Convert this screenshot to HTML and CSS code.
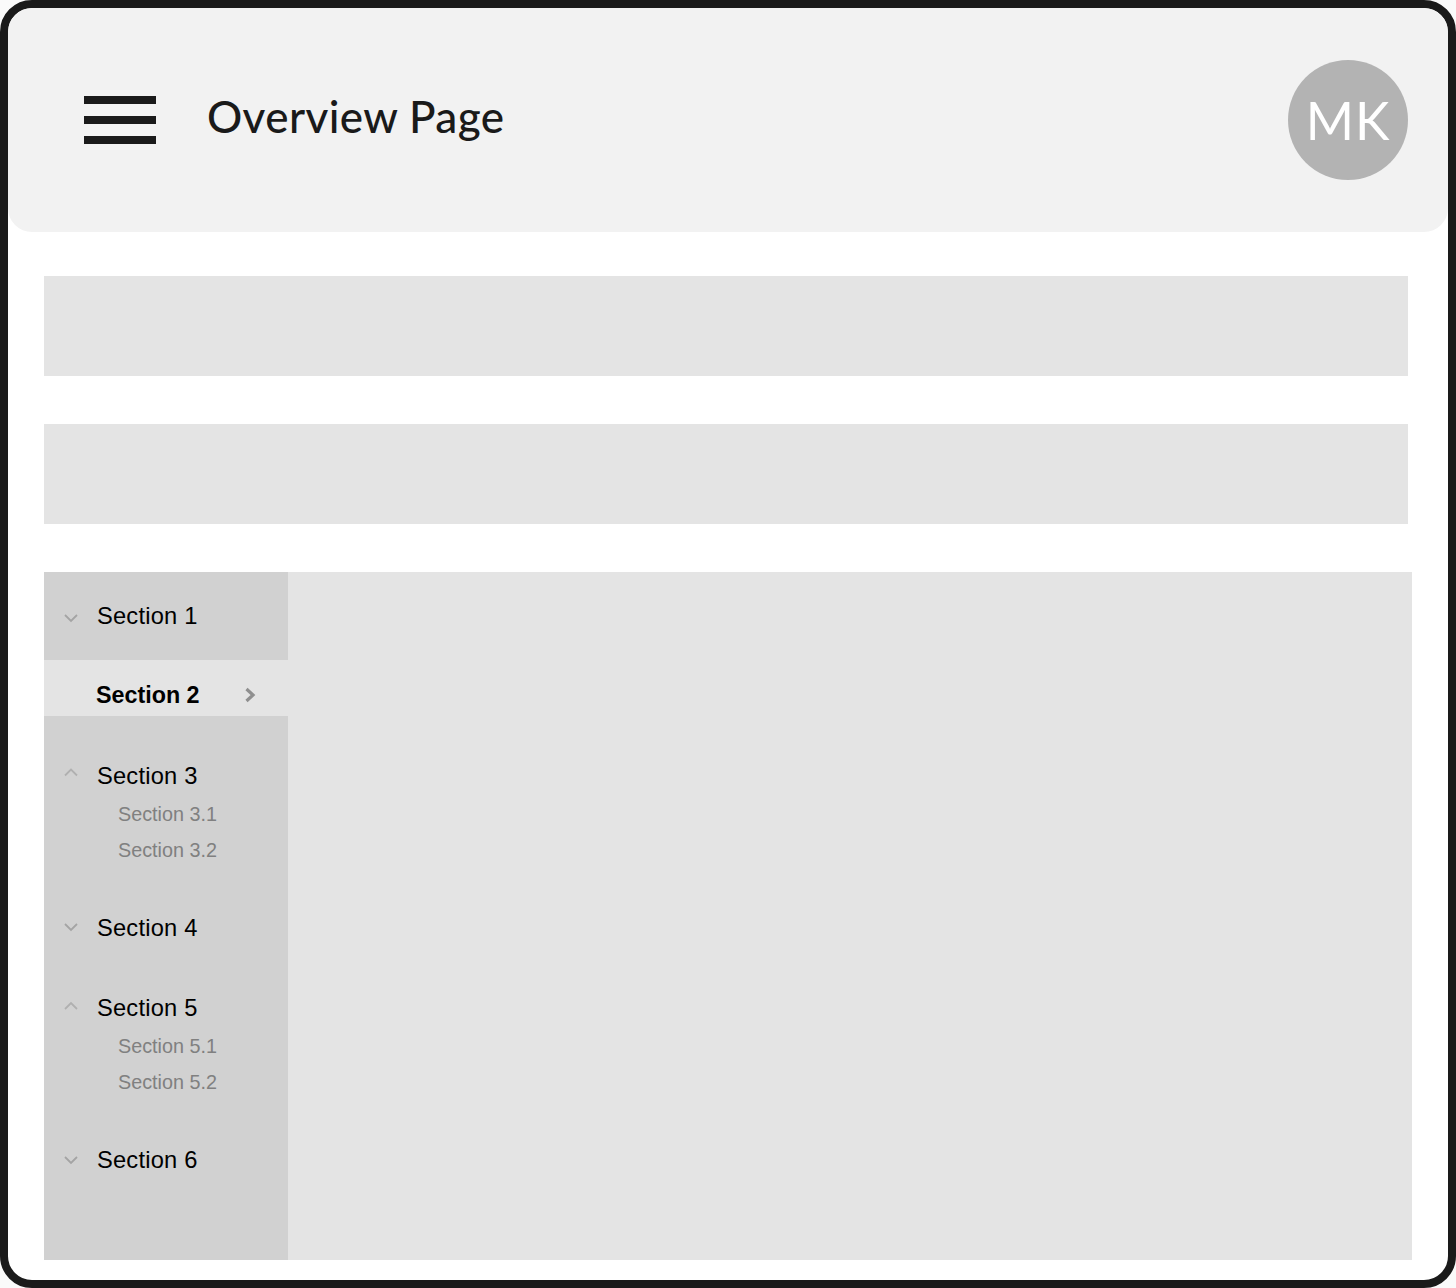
FILE: index.html
```html
<!DOCTYPE html>
<html lang="en">

<head>
    <meta charset="UTF-8">
    <title>Overview Page</title>
    <link rel="stylesheet" href="styles.css">
</head>

<body>

    <div class="frame">

        <header class="topbar">
            <div class="burger">
                <span></span>
                <span></span>
                <span></span>
            </div>
            <h1 class="title">Overview Page</h1>
            <div class="avatar">MK</div>
        </header>

        <main class="content">
            <div class="bar"></div>
            <div class="bar"></div>

            <section class="panel">
                <nav class="sidebar">

                    <div class="group first">
                        <div class="heading">
                            <svg class="chev" width="14" height="16" viewBox="0 0 14 16">
                                <path d="M1 7 L7 13 L13 7" fill="none" stroke="#a4a4a4" stroke-width="1.8" />
                            </svg>
                            <span>Section 1</span>
                        </div>
                    </div>

                    <div class="group active">
                        <div class="heading">
                            <span class="noicon"></span>
                            <span>Section 2</span>
                            <svg class="arrow" width="12" height="16" viewBox="0 0 12 16">
                                <path d="M2.5 2 L9 8 L2.5 14" fill="none" stroke="#8f8f8f" stroke-width="3.2" />
                            </svg>
                        </div>
                    </div>

                    <div class="group open after-active">
                        <div class="heading">
                            <svg class="chev" width="14" height="16" viewBox="0 0 14 16">
                                <path d="M1 7.5 L7 1.5 L13 7.5" fill="none" stroke="#b0b0b0" stroke-width="1.8" />
                            </svg>
                            <span>Section 3</span>
                        </div>
                        <p class="sub">Section 3.1</p>
                        <p class="sub">Section 3.2</p>
                    </div>

                    <div class="group">
                        <div class="heading">
                            <svg class="chev" width="14" height="16" viewBox="0 0 14 16">
                                <path d="M1 4 L7 10 L13 4" fill="none" stroke="#a4a4a4" stroke-width="1.8" />
                            </svg>
                            <span>Section 4</span>
                        </div>
                    </div>

                    <div class="group open">
                        <div class="heading">
                            <svg class="chev" width="14" height="16" viewBox="0 0 14 16">
                                <path d="M1 9 L7 3 L13 9" fill="none" stroke="#b0b0b0" stroke-width="1.8" />
                            </svg>
                            <span>Section 5</span>
                        </div>
                        <p class="sub">Section 5.1</p>
                        <p class="sub">Section 5.2</p>
                    </div>

                    <div class="group">
                        <div class="heading">
                            <svg class="chev" width="14" height="16" viewBox="0 0 14 16">
                                <path d="M1 5 L7 11 L13 5" fill="none" stroke="#a4a4a4" stroke-width="1.8" />
                            </svg>
                            <span>Section 6</span>
                        </div>
                    </div>

                </nav>
                <div class="main-area"></div>
            </section>
        </main>

    </div>

</body></html>
```

FILE: styles.css
```css
* {
    box-sizing: border-box;
}

body {
    margin: 0;
    background-color: #fafafa;
}

.frame {
    height: 1288px;
    border: 8px solid #1a1a1a;
    border-radius: 32px;
    background-color: #fff;
    overflow: hidden;
    display: flex;
    flex-direction: column;
}

.topbar {
    height: 224px;
    flex-shrink: 0;
    background-color: #f2f2f2;
    border-radius: 24px;
    display: flex;
    align-items: center;
    padding-left: 76px;
    padding-right: 40px;
}

.burger {
    display: flex;
    flex-direction: column;
    gap: 12px;
    width: 72px;
}

.burger span {
    display: block;
    height: 8px;
    background-color: #1a1a1a;
}

.title {
    margin: 0 0 0 51px;
    padding-bottom: 8px;
    font-family: "Lato", sans-serif;
    font-weight: 500;
    font-size: 44px;
    color: #1a1a1a;
    letter-spacing: 0.4px;
    flex: 1;
}

.avatar {
    width: 120px;
    height: 120px;
    border-radius: 50%;
    background-color: #b3b3b3;
    color: #fff;
    font-family: "Lato", sans-serif;
    font-size: 52px;
    display: flex;
    align-items: center;
    justify-content: center;
    letter-spacing: 1px;
}

.content {
    flex: 1;
    display: flex;
    flex-direction: column;
    gap: 48px;
    padding: 44px 40px 20px 36px;
}

.bar {
    height: 100px;
    background-color: #e4e4e4;
}

.panel {
    flex: 1;
    display: flex;
    margin-right: -4px;
    background-color: #e4e4e4;
}

.sidebar {
    width: 244px;
    background-color: #d1d1d1;
    font-family: "Liberation Sans", Arial, sans-serif;
}

.main-area {
    flex: 1;
}

.group {
    padding: 20px 0;
}

.group.first {
    padding: 24px 0;
}

.group.active {
    background-color: #e4e4e4;
    padding: 15px 0 1px;
}

.group.after-active {
    margin-top: 20px;
}

.heading {
    display: flex;
    align-items: center;
    height: 40px;
    padding-left: 20px;
    font-size: 23.7px;
    letter-spacing: 0.2px;
    color: #000;
}

.chev,
.noicon {
    width: 14px;
    height: 16px;
    margin-right: 19px;
    flex-shrink: 0;
}

.active .heading {
    font-weight: bold;
    font-size: 23.3px;
    letter-spacing: 0;
}

.active .noicon {
    margin-right: 18px;
}

.arrow {
    margin-left: auto;
    margin-right: 32px;
}

.sub {
    margin: 0;
    height: 36px;
    line-height: 36px;
    padding-left: 74px;
    font-size: 19.8px;
    color: #808080;
}
```
